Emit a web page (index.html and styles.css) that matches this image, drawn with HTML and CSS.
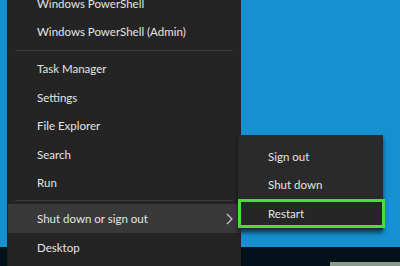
FILE: index.html
```html
<!DOCTYPE html>
<html>
<head>
<meta charset="utf-8">
<link rel="stylesheet" href="styles.css">
</head>
<body>
<div class="desktop">
  <div class="taskbar"><div class="tray"></div></div>
  <div class="menu">
    <div class="item">Windows PowerShell</div>
    <div class="item">Windows PowerShell (Admin)</div>
    <div class="sep"></div>
    <div class="item">Task Manager</div>
    <div class="item">Settings</div>
    <div class="item">File Explorer</div>
    <div class="item">Search</div>
    <div class="item">Run</div>
    <div class="sep sep2"></div>
    <div class="item active"><span>Shut down or sign out</span>
      <svg class="chev" width="7" height="12" viewBox="0 0 7 12"><path d="M1 1 L6 6 L1 11" fill="none" stroke="#d0d0d0" stroke-width="1.1"/></svg>
    </div>
    <div class="item">Desktop</div>
  </div>
  <div class="submenu">
    <div class="sitem">Sign out</div>
    <div class="sitem">Shut down</div>
    <div class="sitem restart">Restart</div>
  </div>
</div>
</body>
</html>
```
FILE: styles.css
```css
html, body { margin: 0; padding: 0; }
body {
  width: 400px;
  height: 266px;
  overflow: hidden;
  background: #1690d0;
  font-family: "Lato", "Open Sans", sans-serif;
  font-size: 11.5px;
  color: #e4e4e4;
}
.desktop { position: relative; width: 400px; height: 266px; }
.taskbar {
  position: absolute;
  left: 0; right: 0; bottom: 0;
  height: 19px;
  background: #03111b;
}
.tray {
  position: absolute;
  left: 330px; bottom: 0;
  width: 70px; height: 4px;
  background: #8c9a88;
}
.menu {
  position: absolute;
  left: 7px; top: -11.25px;
  width: 233px;
  height: 290px;
  background: #242424;
  border-left: 1px solid #1a1a1a;
  display: flex;
  flex-direction: column;
}
.item {
  height: 28.5px;
  flex: none;
  display: flex;
  align-items: center;
  justify-content: space-between;
  padding-left: 29px;
  padding-right: 8px;
  white-space: nowrap;
}
.item.active { background: #393939; }
.chev { margin-right: 0; }
.sep {
  height: 8.5px;
  flex: none;
  display: flex;
  align-items: center;
  padding: 0 8px 0 7px;
}
.sep::after {
  content: "";
  display: block;
  flex: 1;
  height: 1px;
  background: #3c3c3c;
}
.sep2 { height: 7.5px; }
.submenu {
  position: absolute;
  left: 238px; top: 135px;
  width: 145px;
  padding: 7px 0 2px;
  background: #2a2a2a;
  box-shadow: 0 3px 4px rgba(0,0,0,0.55);
}
.sitem {
  height: 28.5px;
  display: flex;
  align-items: center;
  padding-left: 30px;
}
.restart {
  position: relative;
  margin-right: -2px;
  box-sizing: border-box;
  padding-left: 27px;
  border: 3px solid #46e03a;
  background: #262626;
}
```
